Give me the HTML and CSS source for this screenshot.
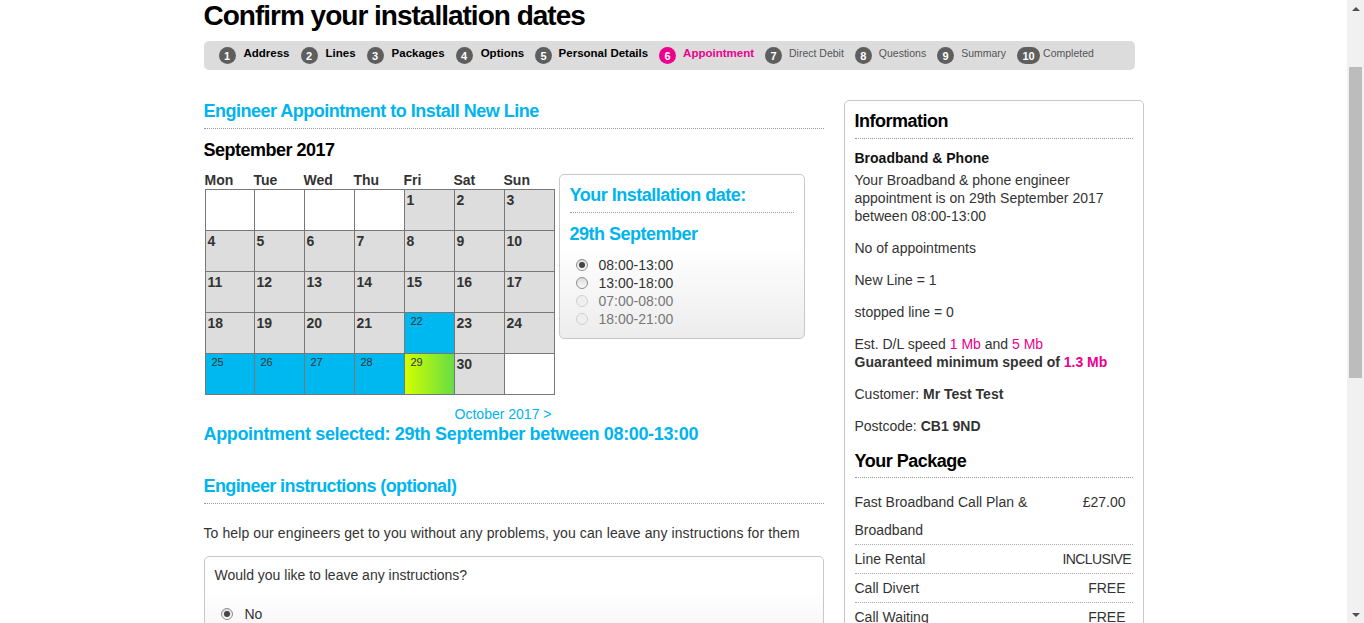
FILE: index.html
```html
<!DOCTYPE html>
<html lang="en">
<head>
<meta charset="utf-8">
<title>Confirm your installation dates</title>
<link rel="stylesheet" href="styles.css">
</head>
<body>
<div class="window">
  <div class="page">
    <div class="container">
      <h1 class="page-title">Confirm your installation dates</h1>
      <ol class="steps">
        <li class="step"><span class="num">1</span><span class="label">Address</span></li>
        <li class="step"><span class="num">2</span><span class="label">Lines</span></li>
        <li class="step"><span class="num">3</span><span class="label">Packages</span></li>
        <li class="step"><span class="num">4</span><span class="label">Options</span></li>
        <li class="step tight"><span class="num">5</span><span class="label">Personal Details</span></li>
        <li class="step current"><span class="num">6</span><span class="label">Appointment</span></li>
        <li class="step todo"><span class="num">7</span><span class="label">Direct Debit</span></li>
        <li class="step todo"><span class="num">8</span><span class="label">Questions</span></li>
        <li class="step todo"><span class="num">9</span><span class="label">Summary</span></li>
        <li class="step todo wide"><span class="num">10</span><span class="label">Completed</span></li>
      </ol>

      <div class="columns">
        <main class="main">
          <h2 class="section-title">Engineer Appointment to Install New Line</h2>
          <h3 class="month">September 2017</h3>

          <div class="calendar-row">
            <div class="calendar">
              <div class="weekdays">
                <span>Mon</span><span>Tue</span><span>Wed</span><span>Thu</span><span>Fri</span><span>Sat</span><span>Sun</span>
              </div>
              <div class="grid">
                <div class="cell blank"></div>
                <div class="cell blank"></div>
                <div class="cell blank"></div>
                <div class="cell blank"></div>
                <div class="cell">1</div>
                <div class="cell">2</div>
                <div class="cell">3</div>
                <div class="cell">4</div>
                <div class="cell">5</div>
                <div class="cell">6</div>
                <div class="cell">7</div>
                <div class="cell">8</div>
                <div class="cell">9</div>
                <div class="cell">10</div>
                <div class="cell">11</div>
                <div class="cell">12</div>
                <div class="cell">13</div>
                <div class="cell">14</div>
                <div class="cell">15</div>
                <div class="cell">16</div>
                <div class="cell">17</div>
                <div class="cell">18</div>
                <div class="cell">19</div>
                <div class="cell">20</div>
                <div class="cell">21</div>
                <div class="cell avail">22</div>
                <div class="cell">23</div>
                <div class="cell">24</div>
                <div class="cell avail">25</div>
                <div class="cell avail">26</div>
                <div class="cell avail">27</div>
                <div class="cell avail">28</div>
                <div class="cell avail chosen">29</div>
                <div class="cell">30</div>
                <div class="cell blank"></div>
              </div>
              <div class="cal-nav"><a class="link">October 2017 &gt;</a></div>
            </div>

            <div class="install-box">
              <h3 class="box-title">Your Installation date:</h3>
              <h3 class="box-date">29th September</h3>
              <ul class="slots">
                <li class="slot"><span class="radio checked"></span>08:00-13:00</li>
                <li class="slot"><span class="radio"></span>13:00-18:00</li>
                <li class="slot disabled"><span class="radio"></span>07:00-08:00</li>
                <li class="slot disabled"><span class="radio"></span>18:00-21:00</li>
              </ul>
            </div>
          </div>

          <p class="selected">Appointment selected: 29th September between 08:00-13:00</p>

          <h2 class="section-title instructions">Engineer instructions (optional)</h2>
          <p class="help">To help our engineers get to you without any problems, you can leave any instructions for them</p>

          <div class="question-box">
            <p class="question">Would you like to leave any instructions?</p>
            <div class="option"><span class="radio checked"></span>No</div>
          </div>
        </main>

        <aside class="sidebar">
          <div class="info-box">
            <h3 class="side-title">Information</h3>
            <h4 class="side-sub">Broadband &amp; Phone</h4>
            <p class="first">Your Broadband &amp; phone engineer appointment is on 29th September 2017 between 08:00-13:00</p>
            <p>No of appointments</p>
            <p>New Line = 1</p>
            <p>stopped line = 0</p>
            <p>Est. D/L speed <span class="pink">1 Mb</span> and <span class="pink">5 Mb</span><br><strong>Guaranteed minimum speed of <span class="pink">1.3 Mb</span></strong></p>
            <p>Customer: <strong>Mr Test Test</strong></p>
            <p>Postcode: <strong>CB1 9ND</strong></p>

            <h3 class="side-title package">Your Package</h3>
            <ul class="package">
              <li class="pkg-row"><span class="pkg-name">Fast Broadband Call Plan &amp; Broadband</span><span class="pkg-price">£27.00</span></li>
              <li class="pkg-row"><span class="pkg-name">Line Rental</span><span class="pkg-price long">INCLUSIVE</span></li>
              <li class="pkg-row"><span class="pkg-name">Call Divert</span><span class="pkg-price">FREE</span></li>
              <li class="pkg-row"><span class="pkg-name">Call Waiting</span><span class="pkg-price">FREE</span></li>
            </ul>
          </div>
        </aside>
      </div>
    </div>
  </div>

  <div class="scrollbar">
    <div class="sb-btn"><span class="arrow-up"></span></div>
    <div class="sb-track"><div class="sb-thumb"></div></div>
    <div class="sb-btn"><span class="arrow-down"></span></div>
  </div>
</div>
</body>
</html>
```

FILE: styles.css
```css
* { box-sizing: border-box; }

html, body {
  margin: 0;
  padding: 0;
}

body {
  font-family: "Liberation Sans", Arial, sans-serif;
  font-size: 14px;
  line-height: 18px;
  color: #333;
  background: #fff;
}

.window {
  display: flex;
  height: 623px;
  overflow: hidden;
}

.page {
  flex: 1;
  min-width: 0;
  overflow: hidden;
}

.container {
  width: 940px;
  margin: 0 auto;
}

.page-title {
  margin: 0;
  font-size: 28px;
  line-height: 32px;
  letter-spacing: -1px;
  font-weight: bold;
  color: #000;
}

/* ---------- step bar ---------- */
.steps {
  list-style: none;
  margin: 9px 0 0;
  padding: 0 0 0 15px;
  width: 931px;
  height: 29px;
  background: #dcdcdc;
  border-radius: 5px;
  display: flex;
  align-items: center;
  gap: 11px;
}

.step {
  display: flex;
  align-items: center;
  gap: 8px;
  font-size: 11.5px;
  line-height: 14px;
  font-weight: bold;
  color: #000;
}

.step.tight { gap: 6.5px; }

.step .label {
  padding-bottom: 5px;
}

.step .num {
  width: 17px;
  height: 17px;
  border-radius: 50%;
  background: #5e5e5e;
  color: #fff;
  font-size: 11px;
  font-weight: bold;
  display: flex;
  align-items: center;
  justify-content: center;
}

.step.current { color: #ec008c; gap: 7px; }
.step.current .num { background: #ec008c; }

.step.todo {
  font-weight: normal;
  font-size: 10.5px;
  color: #555;
  gap: 7px;
}

.step.wide { gap: 3px; }
.step.wide .num {
  width: 23px;
  border-radius: 9px;
}

/* ---------- columns ---------- */
.columns {
  display: flex;
  gap: 20px;
  margin-top: 30px;
}

.main { width: 620px; }
.sidebar { width: 300px; }

.section-title {
  margin: 0;
  font-size: 18px;
  line-height: 22px;
  letter-spacing: -0.5px;
  font-weight: bold;
  color: #00b4ef;
  padding-bottom: 6px;
  border-bottom: 1px dotted #999;
}

.month {
  margin: 10px 0 0;
  font-size: 18px;
  line-height: 22px;
  letter-spacing: -0.5px;
  font-weight: bold;
  color: #000;
}

/* ---------- calendar ---------- */
.calendar-row {
  display: flex;
  align-items: flex-start;
  gap: 4px;
  margin-top: 12px;
}

.calendar { width: 351px; }

.weekdays {
  display: grid;
  grid-template-columns: 49px repeat(6, 50px);
  margin-left: 1px;
  margin-top: -1px;
  padding-bottom: 1px;
  font-size: 14px;
  line-height: 16px;
  font-weight: bold;
  color: #333;
}

.grid {
  display: grid;
  grid-template-columns: 48px repeat(6, 49px);
  grid-auto-rows: 40px;
  gap: 1px;
  padding: 1px;
  margin-left: 1px;
  width: 350px;
  background: #777;
}

.cell {
  background: #dddddd;
  font-size: 14px;
  line-height: 16px;
  font-weight: bold;
  color: #333;
  padding: 2px 0 0 2px;
}

.cell.blank { background: #fff; }

.cell.avail {
  background: #00b8f0;
  font-size: 11px;
  line-height: 13px;
  font-weight: normal;
  padding: 2px 0 0 6px;
}

.cell.chosen {
  background: linear-gradient(to right, #d2ff00, #66dd44);
}

.cal-nav {
  margin-top: 10px;
  text-align: right;
  padding-right: 3px;
}

.link { color: #00b4ef; }

/* ---------- installation box ---------- */
.install-box {
  width: 246px;
  margin-top: 1px;
  border: 1px solid #c8c8c8;
  border-radius: 5px;
  padding: 9px 10px 10px;
  background: linear-gradient(#fff 45%, #ececec);
}

.box-title {
  margin: 0;
  font-size: 18px;
  line-height: 22px;
  letter-spacing: -0.5px;
  font-weight: bold;
  color: #00b4ef;
  padding-bottom: 6px;
  border-bottom: 1px dotted #999;
}

.box-date {
  margin: 10px 0 0;
  font-size: 18px;
  line-height: 22px;
  letter-spacing: -0.5px;
  font-weight: bold;
  color: #00b4ef;
}

.slots {
  list-style: none;
  margin: 11px 0 0;
  padding: 0;
}

.slot {
  display: flex;
  align-items: center;
  height: 18px;
  color: #333;
}

.slot.disabled { color: #777; }

.radio {
  width: 12px;
  height: 12px;
  border-radius: 50%;
  border: 1px solid #8e8e8e;
  background: linear-gradient(#dcdcdc, #fafafa);
  margin: 0 11px 0 6px;
  display: flex;
  align-items: center;
  justify-content: center;
  flex: none;
}

.radio.checked::after {
  content: "";
  width: 6px;
  height: 6px;
  border-radius: 50%;
  background: #444;
}

.slot.disabled .radio {
  border-color: #d0d0d0;
  background: #efefef;
}

/* ---------- below calendar ---------- */
.selected {
  margin: 0;
  font-size: 18px;
  line-height: 22px;
  letter-spacing: -0.35px;
  font-weight: bold;
  color: #00b4ef;
}

.section-title.instructions {
  margin-top: 30px;
  letter-spacing: -0.6px;
}

.help {
  margin: 20px 0 0;
  letter-spacing: 0.1px;
}

.question-box {
  margin-top: 14px;
  border: 1px solid #c8c8c8;
  border-radius: 5px;
  padding: 9px 10px;
  min-height: 120px;
  background: linear-gradient(#fff 30%, #ececec);
}

.question { margin: 0; }

.option {
  display: flex;
  align-items: center;
  margin-top: 21px;
}

.option .radio { margin-right: 12px; }

/* ---------- sidebar ---------- */
.info-box {
  border: 1px solid #c8c8c8;
  border-radius: 5px;
  padding: 9px 10px 10px;
  min-height: 600px;
}

.side-title {
  margin: 0;
  font-size: 18px;
  line-height: 22px;
  letter-spacing: -0.5px;
  font-weight: bold;
  color: #000;
  padding-bottom: 6px;
  border-bottom: 1px dotted #999;
}

.side-title.package {
  margin-top: 5px;
  padding-bottom: 5px;
}

.side-sub {
  margin: 10px 0 0;
  font-size: 14px;
  line-height: 18px;
  font-weight: bold;
  color: #111;
}

.info-box p { margin: 14px 0 0; }
.info-box p.first { margin-top: 4px; }

.pink { color: #ec008c; }

.package {
  list-style: none;
  margin: 0;
  padding: 10px 0 0;
}

.pkg-row {
  display: flex;
  line-height: 28px;
  border-bottom: 1px dotted #aaa;
}

.pkg-name { flex: 1; }

.pkg-price {
  width: 70px;
  padding-right: 7px;
  text-align: right;
  white-space: nowrap;
}

.pkg-price.long { letter-spacing: -0.6px; }

/* ---------- scrollbar ---------- */
.scrollbar {
  width: 17px;
  flex: none;
  background: #f1f1f1;
  display: flex;
  flex-direction: column;
}

.sb-btn {
  height: 17px;
  display: flex;
  align-items: center;
  justify-content: center;
}

.sb-track { flex: 1; }

.sb-thumb {
  margin: 50px 2px 0;
  height: 311px;
  background: #bcbcbc;
}

.arrow-up {
  width: 0;
  height: 0;
  border-left: 4px solid transparent;
  border-right: 4px solid transparent;
  border-bottom: 4px solid #505050;
}

.arrow-down {
  width: 0;
  height: 0;
  border-left: 4px solid transparent;
  border-right: 4px solid transparent;
  border-top: 4px solid #505050;
}
```
